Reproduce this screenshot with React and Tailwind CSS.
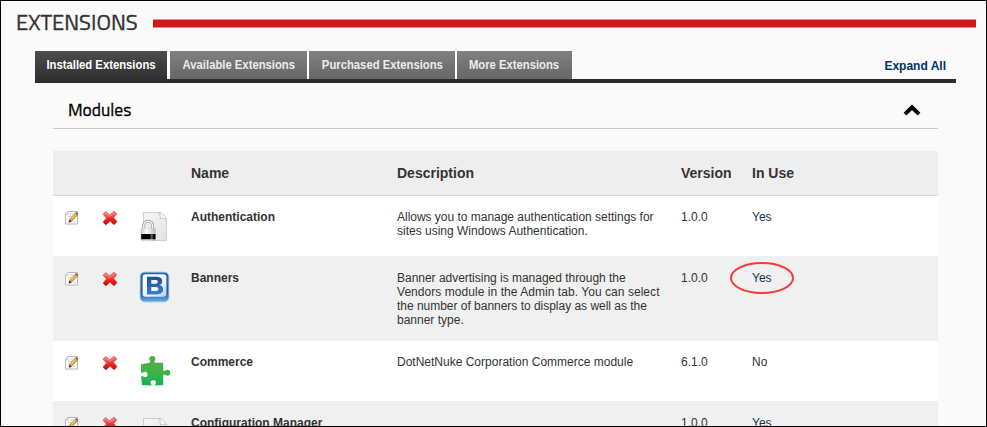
import React from "react";

const rows = [
  { name: "Authentication", icon: "lock", lines: [{ text: "Allows you to manage authentication settings for", cls: "tracking-[-0.02px]" }, { text: "sites using Windows Authentication.", cls: "" }], version: "1.0.0", use: "Yes", cls: "h-[60px] bg-white pt-[14px]" },
  { name: "Banners", icon: "b", lines: [{ text: "Banner advertising is managed through the", cls: "tracking-[-0.02px]" }, { text: "Vendors module in the Admin tab. You can select", cls: "tracking-[0.05px]" }, { text: "the number of banners to display as well as the", cls: "tracking-[-0.02px]" }, { text: "banner type.", cls: "" }], version: "1.0.0", use: "Yes", cls: "h-[85px] bg-[#f0f0f0] pt-[15px]", marked: true },
  { name: "Commerce", icon: "puzzle", lines: [{ text: "DotNetNuke Corporation Commerce module", cls: "" }], version: "6.1.0", use: "No", cls: "h-[60px] bg-white pt-[14px]" },
  { name: "Configuration Manager", icon: "page", lines: [], version: "1.0.0", use: "Yes", cls: "h-[60px] bg-[#f0f0f0] pt-[15px]" },
];

const tabs = [
  { label: "Installed Extensions", cls: "w-[132px] mr-[3px] bg-linear-to-b from-[#4d4d4d] to-[#2c2c2c] text-white" },
  { label: "Available Extensions", cls: "w-[137px] mr-0.5 bg-linear-to-b from-[#818181] to-[#666] text-[#ececec]" },
  { label: "Purchased Extensions", cls: "w-[146px] mr-0.5 bg-linear-to-b from-[#818181] to-[#666] text-[#ececec]" },
  { label: "More Extensions", cls: "w-[115px] bg-linear-to-b from-[#818181] to-[#666] text-[#ececec]" },
];

function EditIcon() {
  return (
    <svg width="16" height="16" viewBox="0 0 16 16" className="block">
      <path d="M4 1.5h9.5v12.5H1.5V4z" fill="#fdfdfd" stroke="#b8b8b8" />
      <path d="M1.5 4.2H4V1.5" fill="#e4e4e4" stroke="#b8b8b8" strokeWidth=".7" />
      <path d="M5.5 4h4M3.8 6.5h4M3.8 9h2.4M9 11.5h2.5" stroke="#c2c7cc" strokeWidth=".8" />
      <path d="M5.4 11.7l.8-3L11.3 3.1l2.1 1.8-5.2 5.8z" fill="#e2ad43" stroke="#94702f" strokeWidth=".7" />
      <path d="M11.3 3.1l2.1 1.8.8-1-2-1.8z" fill="#715338" />
      <path d="M5 12.2l.6-2 1.6 1.3z" fill="#282828" stroke="#282828" strokeWidth=".6" />
      <path d="M7.4 8.7l4-4.4" stroke="#ffe28b" strokeWidth=".8" />
    </svg>
  );
}

function DeleteIcon() {
  return (
    <svg width="16" height="16" viewBox="0 0 16 16" className="block">
      <defs>
        <linearGradient id="del" x1="0" y1="0" x2="0" y2="1">
          <stop offset="0" stopColor="#f4857c" />
          <stop offset=".4" stopColor="#f04a48" />
          <stop offset=".6" stopColor="#ee2020" />
          <stop offset="1" stopColor="#d20505" />
        </linearGradient>
      </defs>
      <path d="M1 4.2L3.6 1.6 7.6 4.8 12 1.2 14.8 3.8 11.6 7.6 15 11.4 12.2 14.6 8 11.2 3.8 14.8 1 12 4.5 8z" fill="url(#del)" stroke="#cf3a35" strokeWidth=".6" strokeLinejoin="round" />
      <path d="M2.5 4.2l1.2-1.1 3.9 3 4.4-3.3" fill="none" stroke="#fbb5ae" strokeWidth=".6" />
      <path d="M1.6 12.5l2.2 2 3-2.4M9.6 12.8l2.6 1.6 2.3-2.5" fill="none" stroke="#b20c0c" strokeWidth=".6" />
    </svg>
  );
}

function PageShape() {
  return (
    <>
      <path d="M4.5 2.5h17l6 6v22h-23z" fill="url(#pg)" stroke="#cacaca" strokeWidth=".9" />
      <path d="M19.5 2.5c2 1.6 2 3.8 1.6 6.2 2.4-.8 4.8-.6 6.4.8-.5-3.1-4.2-6.4-8-7z" fill="#fff" stroke="#b9b9b9" strokeWidth=".8" />
    </>
  );
}

function ModuleIcon({ kind }) {
  return (
    <svg width="32" height="32" viewBox="0 0 32 32" className="block">
      <defs>
        <linearGradient id="pg" x1="0" y1="0" x2="1" y2="1">
          <stop offset="0" stopColor="#f6f6f6" />
          <stop offset="1" stopColor="#e2e3e3" />
        </linearGradient>
        <linearGradient id="blue" x1="0" y1="0" x2="0" y2="1">
          <stop offset="0" stopColor="#2d66b0" />
          <stop offset=".7" stopColor="#2259a5" />
          <stop offset="1" stopColor="#6ab0e2" />
        </linearGradient>
        <linearGradient id="face" x1="0" y1="0" x2="1" y2="1">
          <stop offset="0" stopColor="#fff" />
          <stop offset=".6" stopColor="#f1f5f9" />
          <stop offset="1" stopColor="#bdcbd9" />
        </linearGradient>
        <linearGradient id="letter" x1="0" y1="0" x2="0" y2="1">
          <stop offset="0" stopColor="#1d4f9c" />
          <stop offset="1" stopColor="#3584c6" />
        </linearGradient>
        <linearGradient id="green" x1="0" y1="0" x2="0" y2="1">
          <stop offset="0" stopColor="#57a94a" />
          <stop offset=".5" stopColor="#43b445" />
          <stop offset="1" stopColor="#11b456" />
        </linearGradient>
        <linearGradient id="silver">
          <stop offset="0" stopColor="#ccc" />
          <stop offset=".4" stopColor="#fff" />
          <stop offset="1" stopColor="#bbb" />
        </linearGradient>
        <linearGradient id="band">
          <stop offset="0" stopColor="#333" />
          <stop offset=".15" stopColor="#000" />
          <stop offset=".6" stopColor="#000" />
          <stop offset=".75" stopColor="#666" />
          <stop offset=".88" stopColor="#000" />
        </linearGradient>
      </defs>
      {kind === "page" && <PageShape />}
      {kind === "lock" && (
        <>
          <PageShape />
          <path d="M4.8 18.5v-3a4.2 4.2 0 0 1 8.6 0v3" fill="none" stroke="#8a8a8a" strokeWidth="2.8" />
          <path d="M4.8 18.5v-3a4.2 4.2 0 0 1 8.6 0v3" fill="none" stroke="#f4f4f4" strokeWidth="1.6" />
          <rect x="2" y="18.3" width="14.5" height="12.5" rx=".8" fill="url(#silver)" stroke="#b5b5b5" strokeWidth=".4" />
          <rect x="2" y="24" width="14.5" height="5.3" fill="url(#band)" />
        </>
      )}
      {kind === "b" && (
        <>
          <rect x="1.2" y="1.2" width="28.6" height="29.6" rx="4.5" fill="url(#blue)" stroke="#8bb9df" strokeWidth=".8" />
          <rect x="3.6" y="3.2" width="23.8" height="22.6" rx="3.2" fill="url(#face)" />
          <path fillRule="evenodd" d="M8 5.7h9.4c3.9 0 5.9 1.6 5.9 4.5 0 2-1 3.3-2.9 3.9 2.4.5 3.7 2 3.7 4.2 0 3.4-2.4 5.1-6.5 5.1H8zM12.3 8.9v3.8h4.2c1.5 0 2.3-.6 2.3-1.9s-.8-1.9-2.3-1.9zM12.3 15.9v4.2h4.6c1.7 0 2.5-.7 2.5-2.1s-.8-2.1-2.5-2.1z" fill="url(#letter)" />
        </>
      )}
      {kind === "puzzle" && (
        <path d="M2 9.2L9.6 8c1.8-.3 2-1.2 1.2-2.4C9.3 3.1 10.8.9 13.3.9s4 2.2 2.5 4.7c-.8 1.3-.4 2.1 1 2.1h7.4v6.8c0 1.7 1 2 2.3 1 2.3-1.7 4.8-.4 4.8 2.3s-2.6 4-4.8 2.3c-1.4-1-2.3-.5-2.3 1v8.8l-6.9.7c-1.3.1-1.5-.8-.8-1.8 1.3-1.7.1-3.6-2.2-3.6s-3.5 1.9-2.2 3.6c.8 1 .5 1.9-.8 1.8L3 29.9l-.8-7.4c-.1-1.4.6-1.9 1.9-1.1 2.2 1.4 4.5.3 4.5-2s-2.3-3.4-4.5-2c-1.2.8-2.1.3-2.1-1z" fill="url(#green)" />
      )}
    </svg>
  );
}

export default function App() {
  return (
    <div className="h-[427px] w-[987px] overflow-hidden border border-black bg-[#fafafa] font-['Liberation_Sans',Arial,sans-serif] text-[12px] text-[#333]">
      <header className="flex h-[50px] pl-[15px]">
        <h1 className="w-[137px] shrink-0 pt-[6px] font-['Titillium_Web','Open_Sans',sans-serif] text-[22px] leading-[30px] whitespace-nowrap [-webkit-text-stroke:0.35px_#333]">
          EXTENSIONS
        </h1>
        <div className="mt-[18px] h-[9px] w-[823px] border-y border-[#e78c8e] bg-[#d0171b]" />
      </header>
      <nav className="ml-[34px] flex h-8 w-[921px] border-b-4 border-[#2c2c2c] font-bold">
        <div className="flex bg-white">
          {tabs.map((tab, i) => (
            <div key={tab.label} className={`flex shrink-0 justify-center leading-[28px] whitespace-nowrap ${tab.cls} ${i === 0 ? "h-8" : "h-7"}`}>
              <span className="inline-block scale-x-[0.94]">{tab.label}</span>
            </div>
          ))}
        </div>
        <a className="mr-[10px] ml-auto pt-px leading-[28px] text-[#003366]">Expand All</a>
      </nav>
      <main className="ml-[52px] w-[885px]">
        <div className="flex h-[46px] justify-between border-b border-[#ccc] pr-[17px] pl-[15px]">
          <h2 className="font-['Titillium_Web','Open_Sans',sans-serif] text-[18px] leading-[54px] text-black [-webkit-text-stroke:0.3px_#000]">
            <span className="inline-block origin-left scale-x-[0.97]">Modules</span>
          </h2>
          <svg width="18" height="12" viewBox="0 0 18 12" className="mt-[21px]">
            <path d="M2 10.2L9 3.3l7 6.9" fill="none" stroke="#000" strokeWidth="4" />
          </svg>
        </div>
        <div className="mt-[22px] flex h-[45px] border-b border-[#ddd] bg-[#eee] pl-[138px] text-[14px] leading-[44px] font-bold">
          <div className="w-[206px]">Name</div>
          <div className="w-[284px]">Description</div>
          <div className="w-[71px]">Version</div>
          <div>In Use</div>
        </div>
        {rows.map((row) => (
          <div key={row.name} className={`flex pl-[11px] leading-[14px] ${row.cls}`}>
            <div className="w-[38px]"><EditIcon /></div>
            <div className="w-[37px]"><DeleteIcon /></div>
            <div className="w-[52px]"><ModuleIcon kind={row.icon} /></div>
            <div className="w-[206px] font-bold">{row.name}</div>
            <div className="w-[284px] whitespace-nowrap">
              {row.lines.map((line) => <div key={line.text} className={line.cls}>{line.text}</div>)}
            </div>
            <div className="w-[71px]">{row.version}</div>
            <div className={`relative h-[14px] ${row.use === "Yes" ? "text-[#153653]" : ""}`}>
              {row.use}
              {row.marked && (
                <svg className="absolute -top-[10px] -left-[23px]" width="66" height="34" viewBox="0 0 66 34">
                  <ellipse cx="33" cy="17" rx="31" ry="15" fill="none" stroke="#f5393b" strokeWidth="2" />
                </svg>
              )}
            </div>
          </div>
        ))}
      </main>
    </div>
  );
}
